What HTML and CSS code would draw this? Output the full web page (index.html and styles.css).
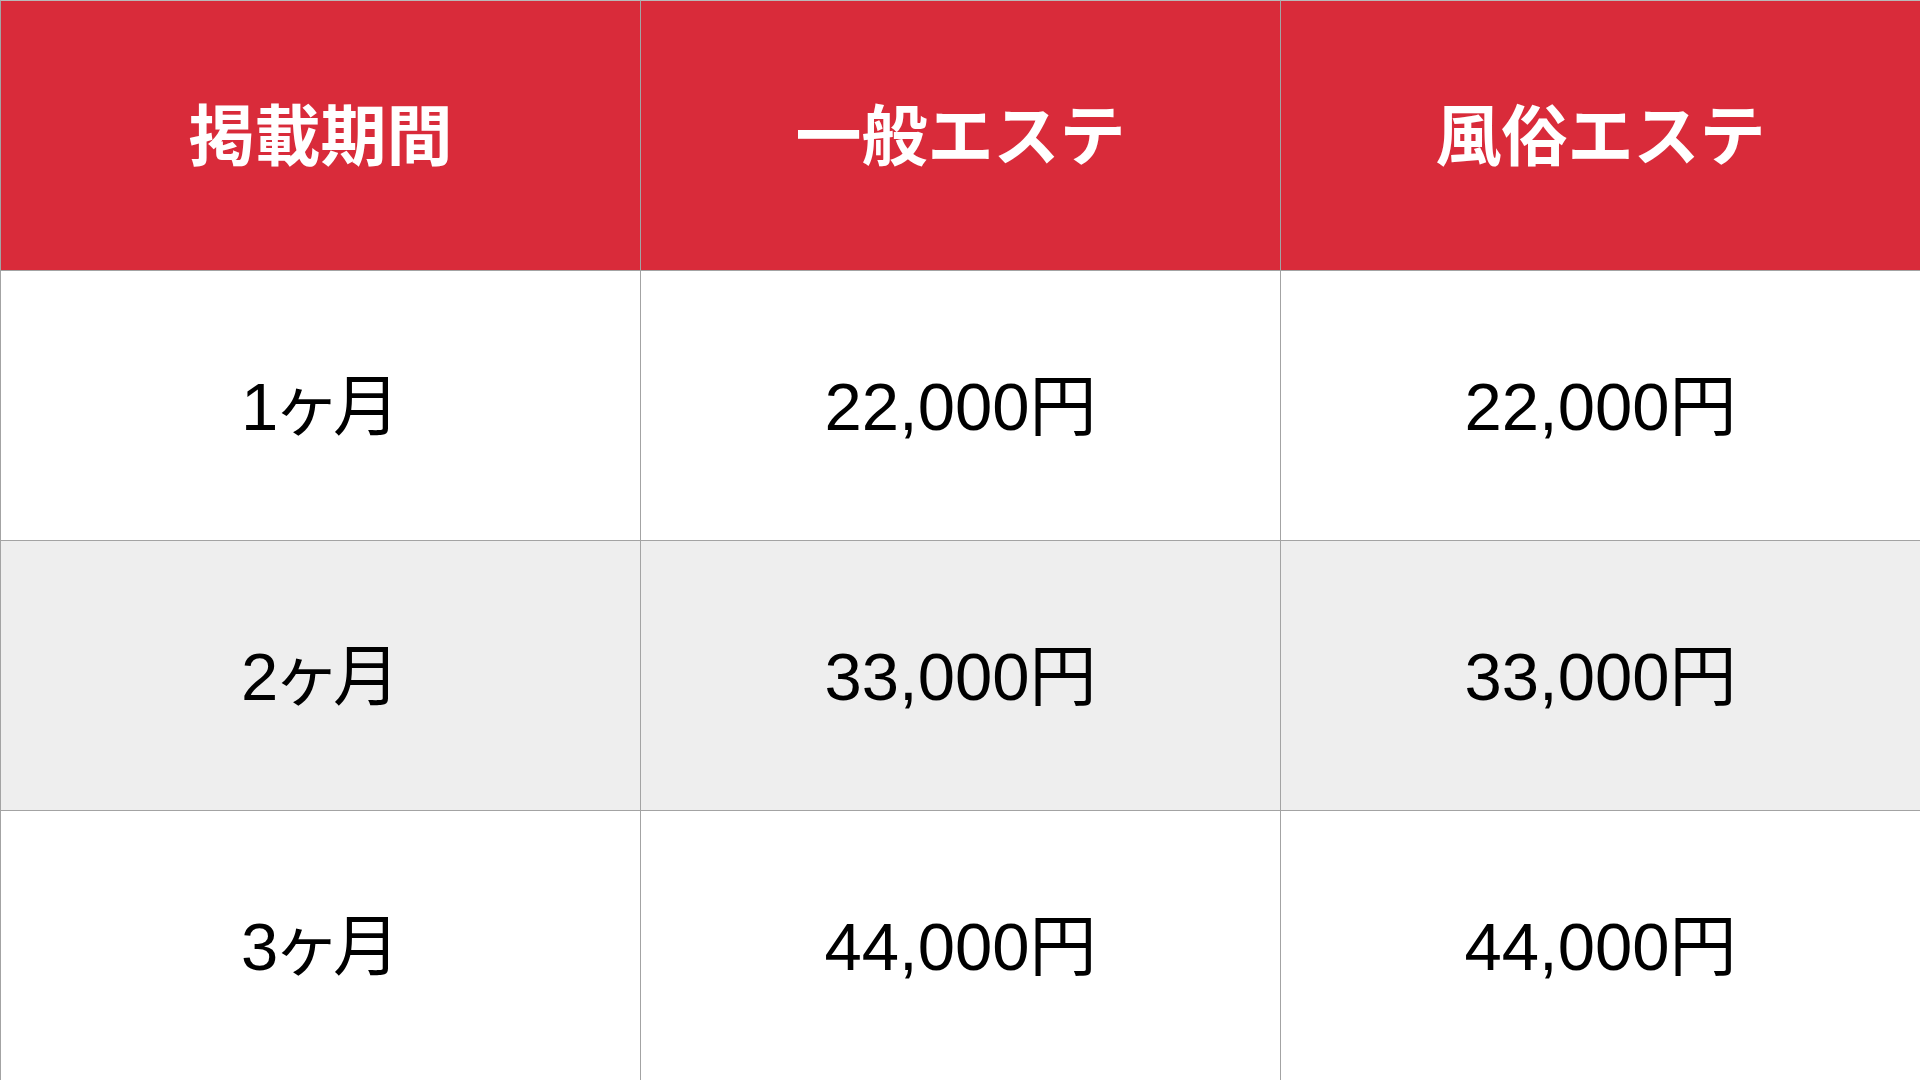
FILE: index.html
```html
<!DOCTYPE html>
<html lang="ja">
<head>
<meta charset="utf-8">
<title>掲載料金</title>
<link rel="stylesheet" href="styles.css">
</head>
<body>
<div class="table">
  <div class="cell head">掲載期間</div>
  <div class="cell head">一般エステ</div>
  <div class="cell head">風俗エステ</div>

  <div class="cell">1ヶ月</div>
  <div class="cell">22,000円</div>
  <div class="cell">22,000円</div>

  <div class="cell alt">2ヶ月</div>
  <div class="cell alt">33,000円</div>
  <div class="cell alt">33,000円</div>

  <div class="cell">3ヶ月</div>
  <div class="cell">44,000円</div>
  <div class="cell">44,000円</div>
</div>
</body>
</html>
```
FILE: styles.css
```css
html, body {
  margin: 0;
  padding: 0;
  background: #ffffff;
}

.table {
  display: grid;
  grid-template-columns: repeat(3, 640px);
  grid-template-rows: repeat(4, 270px);
  width: 1920px;
  height: 1080px;
  overflow: hidden;
}

.cell {
  display: flex;
  align-items: center;
  justify-content: center;
  padding-bottom: 10px;
  box-sizing: border-box;
  border-left: 1px solid #a3a3a3;
  border-top: 1px solid #a3a3a3;
  background: #ffffff;
  color: #000000;
  font-family: "Liberation Sans", "Noto Sans CJK JP", sans-serif;
  font-size: 67px;
  font-weight: 400;
  font-feature-settings: "palt";
}

.head {
  background: #d92b3a;
  color: #ffffff;
  font-family: "Noto Sans CJK JP", sans-serif;
  font-weight: 700;
  font-size: 66px;
  font-feature-settings: normal;
  border-top-color: #b9b9b9;
}

.alt {
  background: #eeeeee;
}
```
